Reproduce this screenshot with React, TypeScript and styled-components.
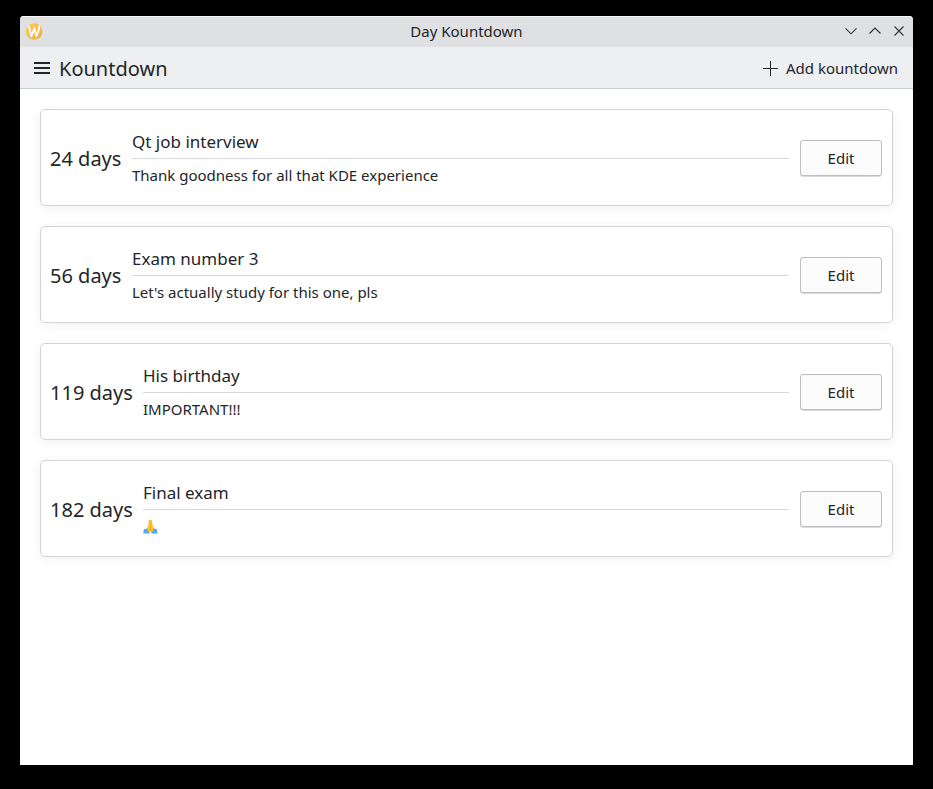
import React from "react";
import styled, { createGlobalStyle } from "styled-components";

const GlobalStyle = createGlobalStyle`
  * { box-sizing: border-box; }
  body { margin: 0; background: #000; }
`;

const Desktop = styled.div`
  width: 933px;
  height: 789px;
  padding: 16px 20px 24px;
  background: #000;
  color: #232629;
  font-family: "Noto Sans", sans-serif;
  font-size: 15px;
`;

const Window = styled.div`
  display: flex;
  flex-direction: column;
  height: 749px;
  overflow: hidden;
  border-radius: 4px 4px 0 0;
  background: #fff;
`;

const TitleBar = styled.header`
  display: grid;
  grid-template-columns: 1fr auto 1fr;
  align-items: center;
  height: 31px;
  padding: 0 6px 2px;
  border-top: 1px solid #f6f6f7;
  background: #dee0e2;
`;

const WindowTitle = styled.span`
  line-height: 20px;
`;

const WindowControls = styled.div`
  display: flex;
  justify-content: flex-end;
  gap: 8px;
`;

const ToolBar = styled.div`
  display: flex;
  align-items: center;
  height: 42px;
  padding: 1px 15px 0 14px;
  border-bottom: 1px solid #caccce;
  background: #eeeff1;
`;

const PageTitle = styled.h1`
  margin: 0 auto 0 9px;
  padding-top: 2px;
  font-size: 20px;
  font-weight: 400;
  line-height: 28px;
`;

const ToolAction = styled.button`
  display: flex;
  align-items: center;
  gap: 8px;
  padding: 0;
  border: 0;
  background: none;
  color: inherit;
  font: inherit;
  line-height: 20px;
`;

const CardList = styled.main`
  display: flex;
  flex-direction: column;
  gap: 20px;
  padding: 20px;
`;

const Card = styled.article`
  display: flex;
  align-items: center;
  height: 97px;
  padding: 1px 10px 0 9px;
  border: 1px solid #d3d4d5;
  border-radius: 5px;
  background: #fff;
  box-shadow: 0 2px 12px rgba(0, 0, 0, 0.06);
`;

const DaysLeft = styled.div<{ $wide: boolean }>`
  flex: none;
  width: ${(p) => (p.$wide ? 93 : 82)}px;
  padding-top: 2px;
  font-size: 20px;
  line-height: 28px;
  white-space: nowrap;
`;

const Details = styled.div`
  flex: 1;
  margin-right: 11px;
  padding-top: 2px;
`;

const EventName = styled.h2`
  height: 33px;
  margin: 0;
  padding-top: 5px;
  border-bottom: 1px solid #d7d8d9;
  font-size: 17px;
  font-weight: 400;
  line-height: 22px;
`;

const Note = styled.p`
  height: 33px;
  margin: 0;
  padding-top: 6px;
  line-height: 20px;
`;

const EditButton = styled.button`
  width: 82px;
  height: 36px;
  padding: 0;
  border: 1px solid #bcbebf;
  border-radius: 3px;
  background: #fcfcfc;
  box-shadow: 0 1px 0 rgba(0, 0, 0, 0.14);
  color: inherit;
  font: inherit;
`;

const Icon = styled.svg`
  display: block;
  flex: none;
`;

const kountdowns = [
  { days: 24, name: "Qt job interview", note: "Thank goodness for all that KDE experience" },
  { days: 56, name: "Exam number 3", note: "Let's actually study for this one, pls" },
  { days: 119, name: "His birthday", note: "IMPORTANT!!!" },
  { days: 182, name: "Final exam", note: "🙏" },
];

const AppLogo = () => (
  <Icon width="17" height="17" viewBox="0 0 17 17">
    <defs>
      <linearGradient id="sun" x1="0" y1="0" x2="1" y2="1">
        <stop offset="0" stopColor="#ffcb5e" />
        <stop offset="1" stopColor="#f2ae36" />
      </linearGradient>
    </defs>
    <circle cx="8.2" cy="8.5" r="8.3" fill="url(#sun)" />
    <path d="M3 3.3 5.3 13.4 8.5 5.2 10.2 13.4Q13 9 13.4 3.3" fill="none" stroke="#fff" strokeWidth="1.8" strokeLinejoin="round" strokeLinecap="round" />
  </Icon>
);

const ControlIcon = ({ d }: { d: string }) => (
  <Icon width="16" height="16" viewBox="0 0 16 16">
    <path d={d} fill="none" stroke="#33373a" strokeWidth="1.15" />
  </Icon>
);

const PrayingHands = () => (
  <Icon width="15" height="20" viewBox="0 0 15 20" role="img" aria-label="🙏">
    <path d="M0.2 17.5 0.9 13.2 4.6 12.2 7 14.6 6.2 17.5Z" fill="#4fa8f0" />
    <path d="M14.6 17.5 13.9 13.2 10.2 12.2 7.8 14.6 8.6 17.5Z" fill="#4fa8f0" />
    <path d="M7.4 3.9C9 3.2 9.2 5 9.5 9.5L11 12.6 9.4 15.8 7.4 14.8 5.4 15.8 3.8 12.6 5.3 9.5C5.6 5 5.8 3.2 7.4 3.9Z" fill="#fcc021" />
    <path d="M7.4 8.5V14.8" stroke="#f0a51c" strokeWidth="0.6" />
  </Icon>
);

export default function App() {
  return (
    <>
      <GlobalStyle />
      <Desktop>
        <Window>
          <TitleBar>
            <AppLogo />
            <WindowTitle>Day Kountdown</WindowTitle>
            <WindowControls>
              <ControlIcon d="M2.5 5.3 8 10.8 13.5 5.3" />
              <ControlIcon d="M2.5 10.5 8 5 13.5 10.5" />
              <ControlIcon d="M3.5 3.5 12.5 12.5M12.5 3.5 3.5 12.5" />
            </WindowControls>
          </TitleBar>
          <ToolBar>
            <Icon width="16" height="12" viewBox="0 0 16 12">
              <path d="M0 1H16M0 6H16M0 11H16" stroke="#232629" strokeWidth="2" />
            </Icon>
            <PageTitle>Kountdown</PageTitle>
            <ToolAction>
              <Icon width="15" height="15" viewBox="0 0 15 15">
                <path d="M0 7.5H15M7.5 0V15" stroke="#232629" />
              </Icon>
              Add kountdown
            </ToolAction>
          </ToolBar>
          <CardList>
            {kountdowns.map((k) => (
              <Card key={k.name}>
                <DaysLeft $wide={k.days > 99}>{k.days} days</DaysLeft>
                <Details>
                  <EventName>{k.name}</EventName>
                  <Note>{k.note === "🙏" ? <PrayingHands /> : k.note}</Note>
                </Details>
                <EditButton>Edit</EditButton>
              </Card>
            ))}
          </CardList>
        </Window>
      </Desktop>
    </>
  );
}
